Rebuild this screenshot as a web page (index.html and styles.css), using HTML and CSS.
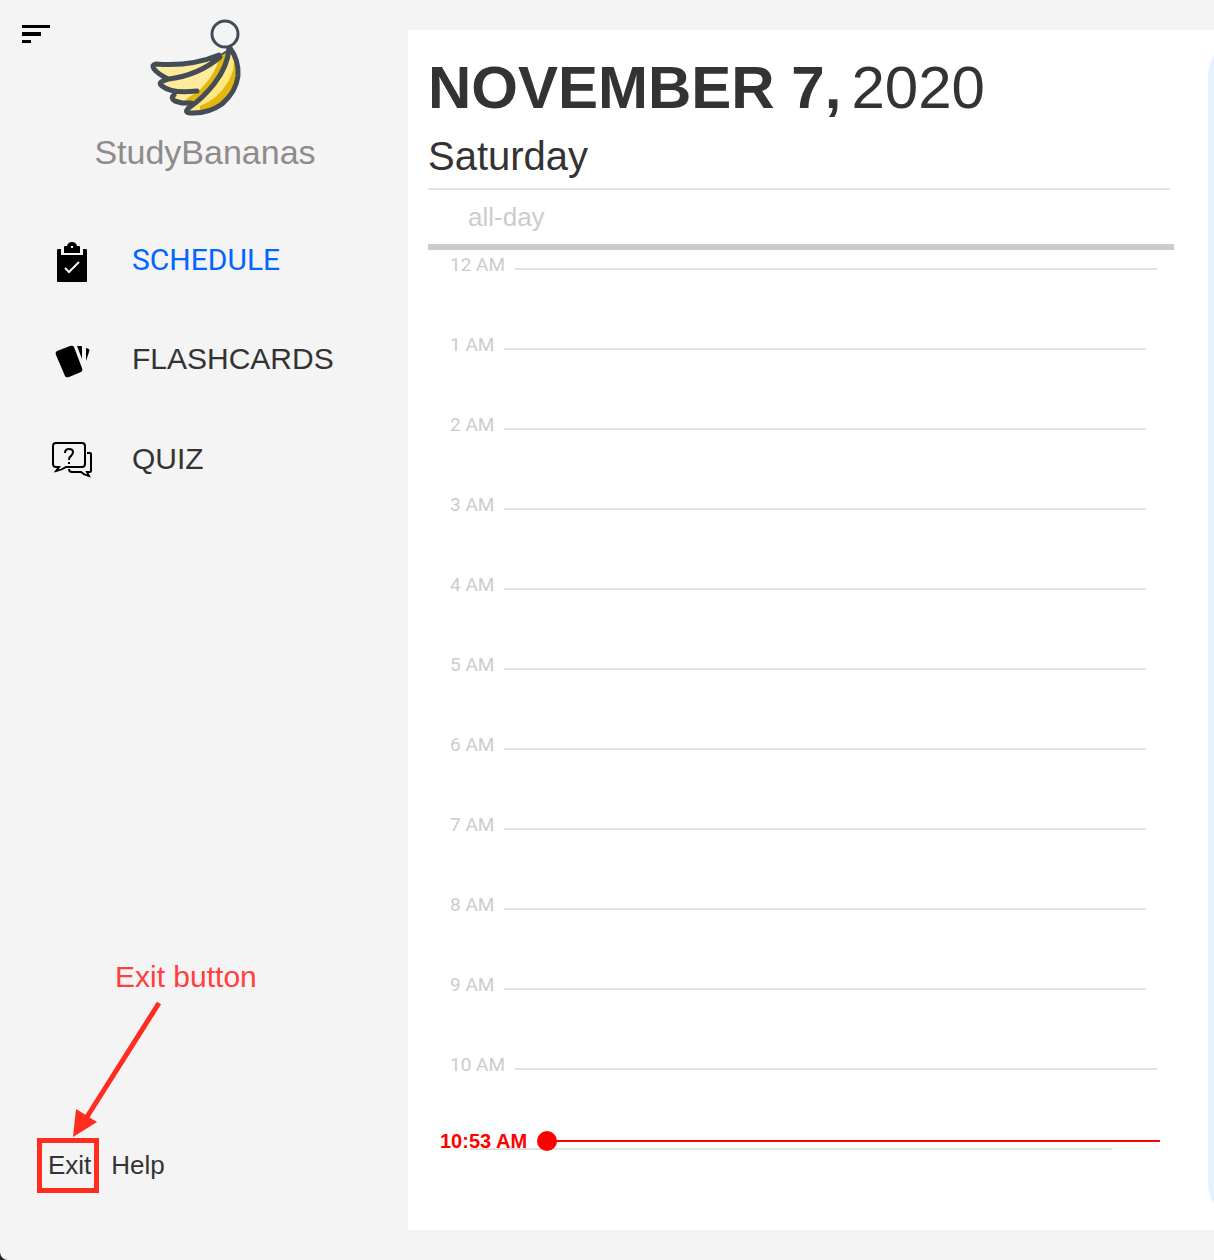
FILE: index.html
```html
<!DOCTYPE html>
<html lang="en">
<head>
<meta charset="utf-8">
<meta name="viewport" content="width=device-width, initial-scale=1">
<title>StudyBananas</title>
<link rel="stylesheet" href="styles.css">
</head>
<body>
<div class="app">
  <div class="sidebar">
    <header class="brand">
      <button class="menu" type="button" aria-label="Menu">
        <svg width="28" height="18" viewBox="0 0 28 18" aria-hidden="true"><path d="M0 0h28v3H0zM0 7h19v4H0zM0 15h9v3H0z"/></svg>
      </button>
      <div class="logo">
        <svg width="110" height="98" viewBox="150 20 110 98" fill="none" stroke="#434d57" stroke-width="5" stroke-linecap="round" stroke-linejoin="round" aria-hidden="true">
          <path fill="#ffeb9b" stroke="none" d="M154 66Q190 70 222 52L229 50 236 60 214 92 190 111 182 103 172 99 176 93 162 84 168 79 158 74Z"/>
          <path fill="#e3b70d" stroke="none" d="M219 59 229 49 228 63Q220 79 205 94L193 103 184 102Q187 97 198 92L206 83Q215 73 219 59Z"/>
          <path fill="#ffe97e" stroke="none" d="M230 50Q241 60 238 80 232 102 207 112L189 111Q192 106 208 94 224 78 230 50Z"/>
          <path fill="#e3b70d" stroke="none" d="M234 57Q242 68 237 85 227 108 200 112V106Q218 99 228 82 235 70 234 57Z"/>
          <path d="M219 55Q190 67 156 64 151 65 154 69 158 74 168 79M220 57Q199 75 169 79L163 81Q158 83 162 86 172 94 197 91M174 95Q170 98 175 101L182 103H191M229 48Q228 66 214 84 203 98 190 107 183 112 190 113 208 114 222 104 236 92 238 76 239 60 230 48"/>
          <path stroke-width="2" d="M221 55 230 49"/>
          <circle cx="225" cy="34" r="13" stroke-width="3"/>
        </svg>
        <span class="brand-name">StudyBananas</span>
      </div>
    </header>

    <nav class="nav" aria-label="Main">
      <a class="nav-link nav-link-active" href="#schedule" aria-current="page">
        <svg width="40" height="40" viewBox="52 239 40 40" aria-hidden="true">
          <path d="M58 249h3v6h22v-6h3q1 0 1 1v31q0 1-1 1H58q-1 0-1-1v-31q0-1 1-1z"/>
          <path fill-rule="evenodd" d="M64 253v-6q0-1 1-1h2q1-4 5-4t5 4h2q1 0 1 1v6zM71 246v2h2v-2z"/>
          <path d="M65 268l4 4 10-10" fill="none" stroke="#f4f4f4" stroke-width="2"/>
        </svg>
        <span>SCHEDULE</span>
      </a>
      <a class="nav-link" href="#flashcards">
        <svg width="40" height="40" viewBox="52 339 40 40" aria-hidden="true">
          <path d="M57 351l13-5q3-1 4 1l8 21q1 3-1 4l-12 5q-3 1-4-1l-9-21q-1-3 1-4zM77 346h4q1 0 1 1v12zM86 348l3 1q1 1 0 3l-3 9z"/>
        </svg>
        <span>FLASHCARDS</span>
      </a>
      <a class="nav-link" href="#quiz">
        <svg width="40" height="40" viewBox="52 439 40 40" fill="none" stroke="#000" stroke-width="2" aria-hidden="true">
          <path d="M56 443h26q3 0 3 3v18q0 3-3 3H66q-4 3-10 4l3-4h-3q-3 0-3-3v-18q0-3 3-3zM87 453h3q1 0 1 1v17q0 1-1 1h-3l2 4q-5-1-8-4H72q-3 0-3-3"/>
          <path d="M65 453q0-4 4-4t4 3q0 2-2 4-2 1-2 4M68 463h2"/>
        </svg>
        <span>QUIZ</span>
      </a>
    </nav>

    <footer class="footer">
      <button class="footer-action" type="button">Exit</button>
      <button class="footer-action" type="button">Help</button>
    </footer>

    <div class="callout">
      <p class="callout-label">Exit button</p>
      <svg class="callout-arrow" width="125" height="136" viewBox="37 1002 125 136" aria-hidden="true">
        <path d="M159 1003 85 1120" stroke="#ff2d20" stroke-width="5" fill="none"/>
        <path d="M73 1137 76 1109 97 1122z" fill="#ff2d20"/>
      </svg>
      <div class="callout-box"></div>
    </div>
  </div>

  <main class="content">
    <section class="day">
      <h1 class="date"><strong>NOVEMBER 7,</strong><span>2020</span></h1>
      <h2 class="weekday">Saturday</h2>
      <p class="all-day">all-day</p>
      <ol class="hours">
        <li class="hour">12 AM</li>
        <li class="hour">1 AM</li>
        <li class="hour">2 AM</li>
        <li class="hour">3 AM</li>
        <li class="hour">4 AM</li>
        <li class="hour">5 AM</li>
        <li class="hour">6 AM</li>
        <li class="hour">7 AM</li>
        <li class="hour">8 AM</li>
        <li class="hour">9 AM</li>
        <li class="hour">10 AM</li>
        <li class="hour hour-covered"></li>
      </ol>
      <div class="now"><time datetime="10:53">10:53 AM</time><span class="now-dot"></span><span class="now-line"></span></div>
    </section>
    <aside class="tasks" aria-label="Tasks"></aside>
  </main>
</div>
</body>
</html>
```
FILE: styles.css
```css
* {
  box-sizing: border-box;
}

html {
  background: #222;
}

body {
  margin: 0;
  color: #333;
  font-family: "Liberation Sans", Arial, sans-serif;
}

h1, h2, p, ol {
  margin: 0;
  padding: 0;
  font-weight: 400;
}

button {
  padding: 0;
  border: 0;
  background: none;
  color: inherit;
  font: inherit;
  cursor: pointer;
}

svg {
  display: block;
  flex: none;
  overflow: visible;
}

.app {
  display: flex;
  min-height: 100vh;
  background: #f4f4f4;
  border-bottom-left-radius: 8px;
}

.sidebar {
  position: relative;
  display: flex;
  flex: none;
  flex-direction: column;
  width: 408px;
}

.brand {
  display: grid;
  height: 209px;
}

.menu,
.logo {
  grid-area: 1 / 1;
}

.menu {
  place-self: start;
  margin: 25px 22px;
}

.logo {
  display: flex;
  flex-direction: column;
  align-items: center;
  place-self: start center;
  gap: 14px;
  padding: 20px 0 0 2px;
}

.brand-name {
  color: #8f8b8b;
  font-size: 34px;
  line-height: 40px;
}

.nav-link {
  display: flex;
  align-items: center;
  gap: 40px;
  height: 100px;
  padding-left: 52px;
  color: #333;
  font-size: 30px;
  text-decoration: none;
}

.nav-link-active {
  color: #06f;
  font-family: Roboto, sans-serif;
}

.nav-link-active svg {
  color: #000;
}

.footer {
  display: flex;
  gap: 20px;
  margin-top: auto;
  padding: 0 48px 80px;
}

.footer-action {
  font-size: 26px;
  line-height: 30px;
}

.callout {
  position: absolute;
  bottom: 67px;
  left: 37px;
  pointer-events: none;
}

.callout-label {
  padding: 0 0 8px 78px;
  color: #ff4040;
  font-size: 30px;
  line-height: 34px;
}

.callout-box {
  width: 62px;
  height: 55px;
  border: 5px solid #ff2d20;
}

.content {
  display: flex;
  flex: 1;
  min-width: 0;
  margin: 30px 0;
  overflow: hidden;
  background: #fff;
}

.day {
  flex: 1;
  min-width: 0;
  padding: 24px 34px 0 20px;
}

.date {
  display: flex;
  gap: 10px;
  font-size: 60px;
  line-height: 68px;
}

.weekday {
  margin-right: 4px;
  padding: 11px 0 9px;
  border-bottom: 2px solid #e2e2e2;
  font-size: 40px;
  line-height: 46px;
}

.all-day {
  padding: 12px 40px;
  border-bottom: 6px solid #ccc;
  color: #ccc;
  font-size: 26px;
  line-height: 30px;
}

.hours {
  padding-left: 22px;
  list-style: none;
}

.hour {
  display: flex;
  gap: 10px;
  height: 80px;
  color: #ccc;
  font-family: Roboto, sans-serif;
  font-size: 19px;
  line-height: 30px;
}

.hour::after {
  flex: none;
  width: calc(100% - 82px);
  height: 2px;
  margin-top: 18px;
  background: #e2e2e2;
  content: "";
}

.hour-covered::after {
  margin-left: 20px;
}

.now {
  position: relative;
  display: flex;
  align-items: center;
  gap: 10px;
  margin: -80px 14px 0 12px;
  color: #f00;
  font-size: 20px;
  font-weight: 700;
  line-height: 22px;
}

.now-dot {
  width: 20px;
  height: 20px;
  border-radius: 50%;
  background: #f00;
}

.now-line {
  flex: 1;
  height: 2px;
  margin-left: -12px;
  background: #f00;
}

.tasks {
  flex: none;
  width: 400px;
  margin: 10px -394px 10px 0;
  border-radius: 36px;
  background: #e5f1ff;
}
```
